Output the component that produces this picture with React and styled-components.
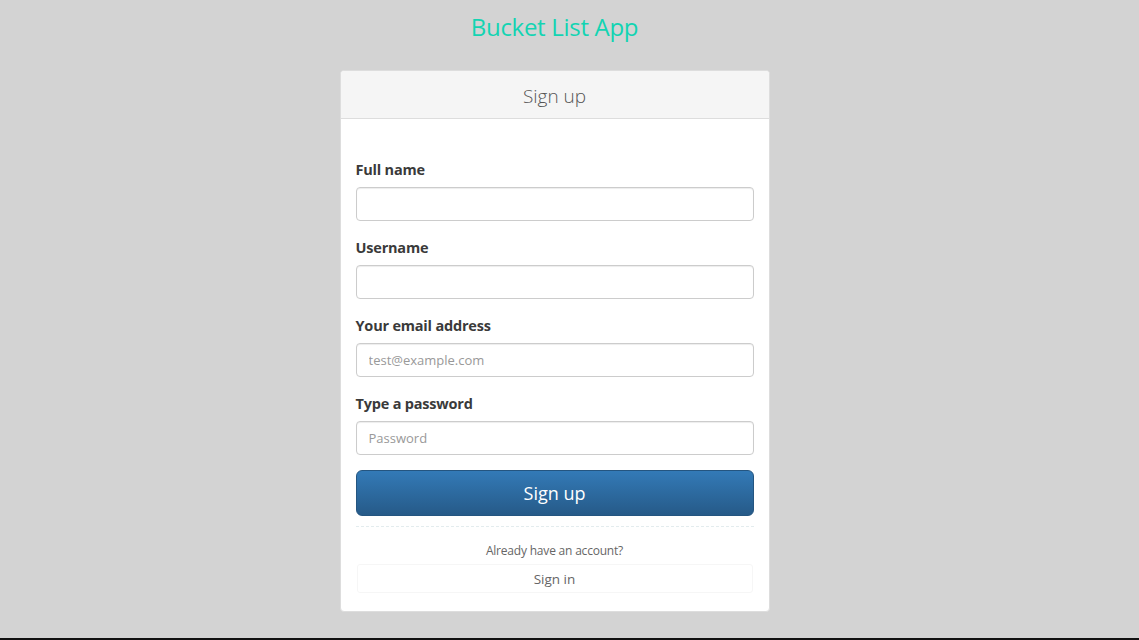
import React from "react";
import styled, { createGlobalStyle } from "styled-components";

const GlobalStyle = createGlobalStyle`
  html, body {
    margin: 0;
    padding: 0;
    background: #d3d3d3;
    font-family: "Open Sans", "Noto Sans", sans-serif;
  }
  * { box-sizing: border-box; }
`;

const Page = styled.div`
  width: 100%;
  height: 640px;
  padding-right: 30px;
  display: flex;
  flex-direction: column;
  align-items: center;
  border-bottom: 2px solid #111;
`;

const AppTitle = styled.h1`
  margin: 10px 0 0;
  height: 38px;
  line-height: 34px;
  font-size: 24px;
  font-weight: 400;
  color: #12d4b2;
  letter-spacing: -0.3px;
`;

const Card = styled.div`
  margin-top: 22px;
  width: 430px;
  background: #fff;
  border: 1px solid #ddd;
  border-radius: 4px;
  overflow: hidden;
`;

const CardHeader = styled.div`
  height: 48px;
  padding-top: 3px;
  background: #f5f5f5;
  border-bottom: 1px solid #ddd;
  display: flex;
  align-items: center;
  justify-content: center;
  font-size: 19px;
  font-weight: 300;
  color: #555;
`;

const CardBody = styled.form`
  padding: 41px 15px 18px;
  display: flex;
  flex-direction: column;
`;

const Group = styled.div`
  display: flex;
  flex-direction: column;
  margin-bottom: 17px;
`;

const Label = styled.label`
  height: 20px;
  line-height: 20px;
  font-size: 14.5px;
  font-weight: 700;
  color: #3a3a3a;
  margin-bottom: 7px;
  letter-spacing: -0.2px;
`;

const Input = styled.input`
  height: 34px;
  width: 100%;
  border: 1px solid #ccc;
  border-radius: 4px;
  padding: 6px 12px;
  font-family: inherit;
  font-size: 13px;
  color: #555;
  box-shadow: inset 0 1px 1px rgba(0, 0, 0, 0.075);
  outline: none;
  &::placeholder { color: #999; }
`;

const SubmitButton = styled.button`
  margin-top: -2px;
  height: 46px;
  width: 100%;
  border: 1px solid #245580;
  border-radius: 6px;
  background: linear-gradient(to bottom, #337ab7 0%, #265a88 100%);
  color: #fff;
  font-family: inherit;
  font-size: 18px;
  cursor: pointer;
`;

const Divider = styled.div`
  margin-top: 10px;
  border-top: 1px dashed #e3ecee;
`;

const Footer = styled.div`
  display: flex;
  flex-direction: column;
  align-items: center;
  padding-top: 14px;
`;

const Note = styled.p`
  margin: 0;
  height: 20px;
  line-height: 20px;
  font-size: 12px;
  color: #666;
  letter-spacing: -0.2px;
`;

const SignInLink = styled.a`
  margin-top: 3px;
  width: calc(100% - 2px);
  height: 29px;
  display: flex;
  align-items: center;
  justify-content: center;
  border: 1px solid #f6f6f6;
  border-radius: 3px;
  font-size: 13.5px;
  color: #666;
  text-decoration: none;
`;

const fields = [
  { label: "Full name", type: "text" },
  { label: "Username", type: "text" },
  { label: "Your email address", type: "email", placeholder: "test@example.com" },
  { label: "Type a password", type: "password", placeholder: "Password" },
];

export default function App() {
  return (
    <>
      <GlobalStyle />
      <Page>
        <AppTitle>Bucket List App</AppTitle>
        <Card>
          <CardHeader>Sign up</CardHeader>
          <CardBody onSubmit={(e) => e.preventDefault()}>
            {fields.map((f) => (
              <Group key={f.label}>
                <Label>{f.label}</Label>
                <Input type={f.type} placeholder={f.placeholder} />
              </Group>
            ))}
            <SubmitButton type="submit">Sign up</SubmitButton>
            <Divider />
            <Footer>
              <Note>Already have an account?</Note>
              <SignInLink href="#">Sign in</SignInLink>
            </Footer>
          </CardBody>
        </Card>
      </Page>
    </>
  );
}
